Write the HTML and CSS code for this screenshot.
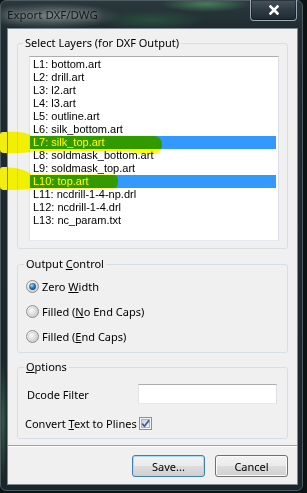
FILE: index.html
```html
<!DOCTYPE html>
<html>
<head>
<meta charset="utf-8">
<title>Export DXF/DWG</title>
<link rel="stylesheet" href="styles.css">
</head>
<body>
<div class="window">
  <div class="titlebar">
    <span class="title">Export DXF/DWG</span>
    <button class="close" aria-label="Close">
      <svg width="10" height="10" viewBox="0 0 10 10"><path d="M1.5 1.5 L8.5 8.5 M8.5 1.5 L1.5 8.5" stroke="#fff" stroke-width="2.6" stroke-linecap="square"/></svg>
    </button>
  </div>
  <div class="client">
    <fieldset class="group group-layers">
      <legend>Select Layers (for DXF Output)</legend>
      <ul class="listbox">
        <li>L1: bottom.art</li>
        <li>L2: drill.art</li>
        <li>L3: l2.art</li>
        <li>L4: l3.art</li>
        <li>L5: outline.art</li>
        <li>L6: silk_bottom.art</li>
        <li class="sel">L7: silk_top.art</li>
        <li>L8: soldmask_bottom.art</li>
        <li>L9: soldmask_top.art</li>
        <li class="sel">L10: top.art</li>
        <li>L11: ncdrill-1-4-np.drl</li>
        <li>L12: ncdrill-1-4.drl</li>
        <li>L13: nc_param.txt</li>
      </ul>
    </fieldset>
    <fieldset class="group group-output">
      <legend>Output <u>C</u>ontrol</legend>
      <label class="radio">
        <svg width="13" height="13" viewBox="0 0 13 13"><defs><radialGradient id="rg1" cx="0.35" cy="0.35" r="0.75"><stop offset="0" stop-color="#ffffff"/><stop offset="1" stop-color="#c4c6c8"/></radialGradient><radialGradient id="dot" cx="0.4" cy="0.35" r="0.7"><stop offset="0" stop-color="#9fd8f6"/><stop offset="0.55" stop-color="#2f78b4"/><stop offset="1" stop-color="#0f3f6e"/></radialGradient></defs><circle cx="6.5" cy="6.5" r="6" fill="url(#rg1)" stroke="#8e9092"/><circle cx="6.5" cy="6.5" r="3.4" fill="url(#dot)"/></svg>
        <span>Zero <u>W</u>idth</span>
      </label>
      <label class="radio">
        <svg width="13" height="13" viewBox="0 0 13 13"><defs><radialGradient id="rg2" cx="0.35" cy="0.35" r="0.75"><stop offset="0" stop-color="#ffffff"/><stop offset="1" stop-color="#c4c6c8"/></radialGradient></defs><circle cx="6.5" cy="6.5" r="6" fill="url(#rg2)" stroke="#8e9092"/><circle cx="6.5" cy="6.5" r="4" fill="none" stroke="#d4d6d8" stroke-width="1"/></svg>
        <span>Filled (<u>N</u>o End Caps)</span>
      </label>
      <label class="radio">
        <svg width="13" height="13" viewBox="0 0 13 13"><defs><radialGradient id="rg3" cx="0.35" cy="0.35" r="0.75"><stop offset="0" stop-color="#ffffff"/><stop offset="1" stop-color="#c4c6c8"/></radialGradient></defs><circle cx="6.5" cy="6.5" r="6" fill="url(#rg3)" stroke="#8e9092"/><circle cx="6.5" cy="6.5" r="4" fill="none" stroke="#d4d6d8" stroke-width="1"/></svg>
        <span>Filled (<u>E</u>nd Caps)</span>
      </label>
    </fieldset>
    <fieldset class="group group-options">
      <legend><u>O</u>ptions</legend>
      <div class="field">
        <span class="field-label">Dcode Filter</span>
        <input class="textbox" type="text">
      </div>
      <div class="field field-check">
        <span class="field-label">Convert <u>T</u>ext to Plines</span>
        <svg class="checkbox" width="13" height="13" viewBox="0 0 13 13"><defs><linearGradient id="cb" x1="0" y1="0" x2="1" y2="1"><stop offset="0" stop-color="#c9ced6"/><stop offset="1" stop-color="#f4f5f7"/></linearGradient></defs><rect x="0.5" y="0.5" width="12" height="12" fill="#f5f5f5" stroke="#8e8f8f"/><rect x="2.5" y="2.5" width="8" height="8" fill="url(#cb)" stroke="#aeb3b9"/><path d="M3.2 6.6 L5.4 9.2 L10 3.4" fill="none" stroke="#3d5b99" stroke-width="1.7"/></svg>
      </div>
    </fieldset>
    <div class="separator"></div>
    <div class="buttons">
      <button class="btn btn-default">Save...</button>
      <button class="btn">Cancel</button>
    </div>
  </div>
</div>
<svg class="marker marker-l7" width="166" height="30" viewBox="0 0 166 30"><path d="M7 4 C16 3 26 4 32 7.5 L150 7.5 C157 7.5 162 10 162 16 C162 23 158 26 150 26 C140 26 132 23.5 124 23.5 L32 23.5 C26 25 16 25.5 7 25 Z" fill="#ffff00"/></svg>
<svg class="marker marker-l10" width="122" height="30" viewBox="0 0 122 30"><path d="M7 3.5 C16 3 26 6 32 10.5 L112 10.5 C116 10.5 118 12 118 17 C118 23 116 24.5 112 24.5 L32 24.5 C26 25.5 16 26 7 26 Z" fill="#ffff00"/></svg>
<div class="edge edge-l7"></div>
<div class="edge edge-l10"></div>
</body>
</html>
```

FILE: styles.css
```css
* { box-sizing: border-box; }
html, body { margin: 0; padding: 0; }
body {
  width: 307px;
  height: 493px;
  overflow: hidden;
  background: #0c1315;
  font-family: "Noto Sans", "Open Sans", sans-serif;
  font-size: 11px;
  color: #000;
}
.window {
  width: 303px;
  height: 491px;
  border: 1px solid #4d5b61;
  border-radius: 6px;
  padding: 0 4px 5px 6px;
  display: flex;
  flex-direction: column;
  background:
    radial-gradient(ellipse 70px 13px at 50px 15px, rgba(165,175,172,0.55), rgba(165,175,172,0) 100%),
    radial-gradient(ellipse 45px 8px at 205px 3px, rgba(80,150,100,0.75), rgba(80,150,100,0) 100%),
    radial-gradient(ellipse 55px 10px at 150px 19px, rgba(45,100,65,0.6), rgba(45,100,65,0) 100%),
    radial-gradient(ellipse 4px 60px at 2px 420px, rgba(60,130,90,0.6), rgba(60,130,90,0) 100%),
    linear-gradient(180deg, #2a383d 0, #1f2b30 30px, #1b2629 100%);
}
.titlebar {
  height: 27px;
  display: flex;
  justify-content: space-between;
  align-items: flex-start;
}
.title {
  margin-top: 6px;
  line-height: 16px;
  font-size: 11.5px;
  color: #141a1b;
  text-shadow: 0 0 6px rgba(220,228,226,0.7);
}
.close {
  width: 47px;
  height: 21px;
  margin-top: -1px;
  margin-right: 1px;
  padding: 0;
  border: 1px solid rgba(190,200,210,0.75);
  border-top: none;
  border-radius: 0 0 4px 4px;
  background: linear-gradient(180deg, #46545f 0, #2e3b44 50%, #1e2a31 100%);
  box-shadow: inset 0 0 0 1px rgba(0,0,0,0.35);
  display: flex;
  align-items: center;
  justify-content: center;
}
.close svg { display: block; }
.client {
  flex: 1;
  background: #f0f0f0;
  border: 1px solid #7d8a92;
  padding: 0 9px;
  display: flex;
  flex-direction: column;
}
.group {
  margin: 0;
  border: 1px solid #d5dfe5;
  border-radius: 3px;
  min-inline-size: 0;
}
.group legend {
  padding: 0 2px;
  line-height: 16px;
}
.group-layers {
  margin-top: 6px;
  padding: 5px 8px 7px 11px;
}
.group-layers legend { margin-left: -6px; }
.listbox {
  list-style: none;
  margin: 0;
  padding: 1px 1px 1px 0;
  height: 185px;
  background: #fff;
  border: 1px solid;
  border-color: #abadb3 #dbdfe6 #e3e9ef #e2e3ea;
  font-family: "Liberation Sans", Arial, sans-serif;
  font-size: 11px;
}
.listbox li {
  height: 13px;
  line-height: 13px;
  padding-left: 3px;
  white-space: nowrap;
}
.listbox li.sel {
  background: #3399ff;
  color: #fff;
  margin-right: 1px;
}
.group-output {
  margin-top: 7px;
  padding: 2px 8px 3px 8px;
}
.group-output legend { margin-left: -2px; }
.radio {
  display: flex;
  align-items: center;
  gap: 3px;
  height: 25px;
}
.radio svg { display: block; flex: none; }
.group-options {
  margin-top: 6px;
  padding: 9px 10px 5px 9px;
}
.group-options legend { margin-left: -3px; }
.field {
  display: flex;
  align-items: center;
  height: 20px;
}
.field-label { width: 111px; flex: none; }
.textbox {
  width: 139px;
  height: 20px;
  margin: 0;
  border: 1px solid;
  border-color: #abadb3 #dbdfe6 #e3e9ef #e2e3ea;
  background: #fff;
}
.field-check {
  margin-top: 9px;
  margin-left: -2px;
}
.field-check .field-label { width: 114px; }
.checkbox { display: block; }
.separator {
  margin: 6px -9px 0;
  border-top: 1px solid #a0a0a0;
  border-bottom: 1px solid #ffffff;
}
.buttons {
  display: flex;
  justify-content: flex-end;
  gap: 10px;
  margin-top: 8px;
}
.btn {
  width: 73px;
  height: 22px;
  padding: 0;
  font: inherit;
  color: #000;
  border: 1px solid #707070;
  border-radius: 3px;
  background: linear-gradient(180deg, #f2f2f2 0, #ebebeb 48%, #dddddd 52%, #cfcfcf 100%);
  box-shadow: inset 0 0 0 1px #fbfbfb;
}
.btn-default {
  border-color: #3c7fb1;
  box-shadow: inset 0 0 0 1px #a8dcf5;
}
.marker {
  position: absolute;
  left: 0;
  mix-blend-mode: multiply;
}
.marker-l7 { top: 128px; }
.marker-l10 { top: 164px; }
.edge {
  position: absolute;
  left: 0;
  width: 7px;
  background: #f2ee10;
}
.edge-l7 { top: 132px; height: 21px; border-radius: 3px 0 0 4px; }
.edge-l10 { top: 167px; height: 23px; border-radius: 3px 0 0 4px; }
```
